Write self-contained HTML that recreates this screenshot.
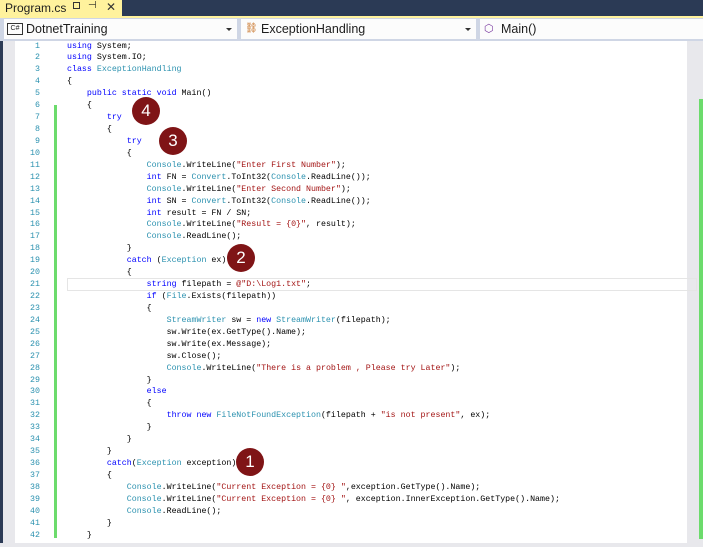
<!DOCTYPE html>
<html><head><meta charset="utf-8"><style>
body{margin:0;width:703px;height:547px;overflow:hidden;background:#fff;position:relative;font-family:"Liberation Sans",sans-serif}
.top{position:absolute;left:0;top:0;width:703px;height:17px;background:#2b3a55}
.tab{position:absolute;left:0;top:0;width:122px;height:17px;background:#fff29d;font-size:12px;color:#1e1e1e}
.yl{position:absolute;left:0;top:16px;width:703px;height:2px;background:#fff29d}
.bar{position:absolute;left:0;top:18px;width:703px;height:23px;background:#cfd6e5}
.dd{position:absolute;top:19px;height:20px;background:#fcfcfc;font-size:12.5px;line-height:20px;color:#1e1e1e}
.arr{position:absolute;right:5px;top:9px;width:0;height:0;border-left:3px solid transparent;border-right:3px solid transparent;border-top:3px solid #333}
.gut{position:absolute;left:0;top:41px;width:15px;height:502px;background:#e8e8ec;border-left:3px solid #2b3a55;box-sizing:border-box}
.ln{position:absolute;left:15px;width:25px;text-align:right;font:8.3px "Liberation Mono",monospace;color:#2b91af}
.code{position:absolute;left:67px;white-space:pre;font:8.3px "Liberation Mono",monospace;color:#000}
.k{color:#0000ff}.t{color:#2b91af}.s{color:#a31515}
.c{position:absolute;width:28px;height:28px;border-radius:50%;background:#7f1416;color:#fff;font-size:17px;text-align:center;line-height:28px}
</style></head><body>
<div class="top"></div>
<div class="tab"><span style="position:absolute;left:5px;top:1px">Program.cs</span><span style="position:absolute;left:73px;top:2px;width:5px;height:5px;border:1px solid #333"></span><span style="position:absolute;left:88px;top:0;font-size:10px">⊣</span><span style="position:absolute;left:106px;top:0;font-size:12px;color:#333">✕</span></div>
<div class="yl"></div>
<div class="bar"></div>
<div class="dd" style="left:4px;width:233px"><span style="position:absolute;left:3px;top:4px;width:14px;height:10px;border:1px solid #333;font-size:7px;line-height:10px;text-align:center">C#</span><span style="position:absolute;left:22px">DotnetTraining</span><div class="arr"></div></div>
<div class="dd" style="left:241px;width:235px"><span style="position:absolute;left:4px;color:#c56b1a;font-size:10px">⛓</span><span style="position:absolute;left:20px">ExceptionHandling</span><div class="arr"></div></div>
<div class="dd" style="left:480px;width:223px"><span style="position:absolute;left:4px;color:#7a3aa0;font-size:11px">⬡</span><span style="position:absolute;left:21px">Main()</span></div>
<div class="gut"></div>
<div style="position:absolute;left:54px;top:105px;width:3px;height:433px;background:#6cdb6c"></div>
<div style="position:absolute;left:687px;top:41px;width:16px;height:502px;background:#e8e8ec"></div>
<div style="position:absolute;left:699px;top:99px;width:4px;height:440px;background:#6cdb6c"></div>
<div style="position:absolute;left:0;top:543px;width:703px;height:4px;background:#e8e8ec"></div>
<div style="position:absolute;left:67px;top:278px;width:628px;height:11px;border:1px solid #e5e5e5"></div>
<div id="L"></div>
<script>
var lines=[
'<span class="k">using</span> System;',
'<span class="k">using</span> System.IO;',
'<span class="k">class</span> <span class="t">ExceptionHandling</span>',
'{',
'    <span class="k">public static void</span> Main()',
'    {',
'        <span class="k">try</span>',
'        {',
'            <span class="k">try</span>',
'            {',
'                <span class="t">Console</span>.WriteLine(<span class="s">"Enter First Number"</span>);',
'                <span class="k">int</span> FN = <span class="t">Convert</span>.ToInt32(<span class="t">Console</span>.ReadLine());',
'                <span class="t">Console</span>.WriteLine(<span class="s">"Enter Second Number"</span>);',
'                <span class="k">int</span> SN = <span class="t">Convert</span>.ToInt32(<span class="t">Console</span>.ReadLine());',
'                <span class="k">int</span> result = FN / SN;',
'                <span class="t">Console</span>.WriteLine(<span class="s">"Result = {0}"</span>, result);',
'                <span class="t">Console</span>.ReadLine();',
'            }',
'            <span class="k">catch</span> (<span class="t">Exception</span> ex)',
'            {',
'                <span class="k">string</span> filepath = <span class="s">@"D:\\Log1.txt"</span>;',
'                <span class="k">if</span> (<span class="t">File</span>.Exists(filepath))',
'                {',
'                    <span class="t">StreamWriter</span> sw = <span class="k">new</span> <span class="t">StreamWriter</span>(filepath);',
'                    sw.Write(ex.GetType().Name);',
'                    sw.Write(ex.Message);',
'                    sw.Close();',
'                    <span class="t">Console</span>.WriteLine(<span class="s">"There is a problem , Please try Later"</span>);',
'                }',
'                <span class="k">else</span>',
'                {',
'                    <span class="k">throw new</span> <span class="t">FileNotFoundException</span>(filepath + <span class="s">"is not present"</span>, ex);',
'                }',
'            }',
'        }',
'        <span class="k">catch</span>(<span class="t">Exception</span> exception)',
'        {',
'            <span class="t">Console</span>.WriteLine(<span class="s">"Current Exception = {0} "</span>,exception.GetType().Name);',
'            <span class="t">Console</span>.WriteLine(<span class="s">"Current Exception = {0} "</span>, exception.InnerException.GetType().Name);',
'            <span class="t">Console</span>.ReadLine();',
'        }',
'    }'];
var h='';
for(var i=0;i<lines.length;i++){var y=41.5+i*11.93;
h+='<div class="ln" style="top:'+y+'px">'+(i+1)+'</div><div class="code" style="top:'+y+'px">'+lines[i]+'</div>';}
document.getElementById('L').innerHTML=h;
</script>
<div class="c" style="left:132px;top:97px">4</div>
<div class="c" style="left:159px;top:127px">3</div>
<div class="c" style="left:227px;top:244px">2</div>
<div class="c" style="left:236px;top:448px">1</div>
</body></html>
